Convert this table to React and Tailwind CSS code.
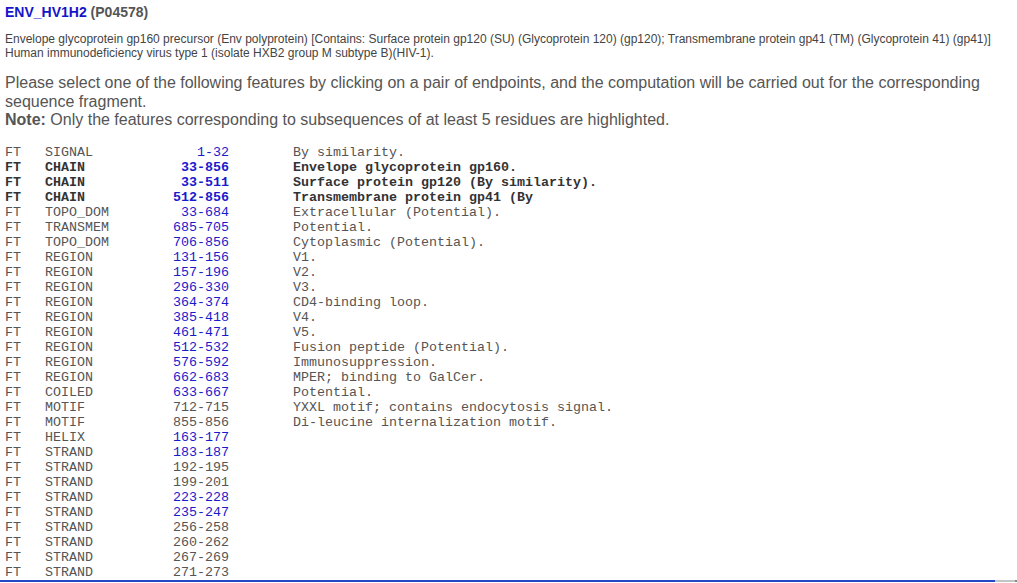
import React from 'react';

// feature rows: [type, range, description, highlighted range?, bold?]
const features = [
  ['SIGNAL', '1-32', 'By similarity.', true, false],
  ['CHAIN', '33-856', 'Envelope glycoprotein gp160.', true, true],
  ['CHAIN', '33-511', 'Surface protein gp120 (By similarity).', true, true],
  ['CHAIN', '512-856', 'Transmembrane protein gp41 (By', true, true],
  ['TOPO_DOM', '33-684', 'Extracellular (Potential).', true, false],
  ['TRANSMEM', '685-705', 'Potential.', true, false],
  ['TOPO_DOM', '706-856', 'Cytoplasmic (Potential).', true, false],
  ['REGION', '131-156', 'V1.', true, false],
  ['REGION', '157-196', 'V2.', true, false],
  ['REGION', '296-330', 'V3.', true, false],
  ['REGION', '364-374', 'CD4-binding loop.', true, false],
  ['REGION', '385-418', 'V4.', true, false],
  ['REGION', '461-471', 'V5.', true, false],
  ['REGION', '512-532', 'Fusion peptide (Potential).', true, false],
  ['REGION', '576-592', 'Immunosuppression.', true, false],
  ['REGION', '662-683', 'MPER; binding to GalCer.', true, false],
  ['COILED', '633-667', 'Potential.', true, false],
  ['MOTIF', '712-715', 'YXXL motif; contains endocytosis signal.', false, false],
  ['MOTIF', '855-856', 'Di-leucine internalization motif.', false, false],
  ['HELIX', '163-177', '', true, false],
  ['STRAND', '183-187', '', true, false],
  ['STRAND', '192-195', '', false, false],
  ['STRAND', '199-201', '', false, false],
  ['STRAND', '223-228', '', true, false],
  ['STRAND', '235-247', '', true, false],
  ['STRAND', '256-258', '', false, false],
  ['STRAND', '260-262', '', false, false],
  ['STRAND', '267-269', '', false, false],
  ['STRAND', '271-273', '', false, false],
];

function FeatureRow({ type, range, desc, linked, bold }) {
  return (
    <div className={`flex h-[15px] leading-[15px] whitespace-pre ${bold ? 'font-bold text-[#333]' : 'text-[#555]'}`}>
      <span className="w-[40px]">FT</span>
      <span className="w-[96px]">{type}</span>
      <span className={`w-[88px] text-right ${linked ? 'text-[#1a1acc] cursor-pointer' : ''}`}>{range}</span>
      <span className="ml-[64px]">{desc}</span>
    </div>
  );
}

export default function App() {
  return (
    <div className="h-[583px] flex flex-col bg-white overflow-hidden font-['Liberation_Sans',Arial,sans-serif]">
      <div className="flex-1 overflow-hidden px-[5px] pt-[4px]">
        <h1 className="text-[14px] leading-[17px] font-bold text-[#555]">
          <span className="text-[#1414c8]">ENV_HV1H2</span> (P04578)
        </h1>

        <p className="mt-[11px] text-[12px] leading-[14px] text-[#444] whitespace-nowrap">
          Envelope glycoprotein gp160 precursor (Env polyprotein) [Contains: Surface protein gp120 (SU) (Glycoprotein 120) (gp120); Transmembrane protein gp41 (TM) (Glycoprotein 41) (gp41)]
          <br />
          Human immunodeficiency virus type 1 (isolate HXB2 group M subtype B)(HIV-1).
        </p>

        <p className="mt-[14px] text-[16px] leading-[18.5px] text-[#555]">
          Please select one of the following features by clicking on a pair of endpoints, and the computation will be carried out for the corresponding
          <br />
          sequence fragment.
          <br />
          <b>Note:</b> Only the features corresponding to subsequences of at least 5 residues are highlighted.
        </p>

        <div className="mt-[15px] font-['Liberation_Mono','Courier_New',monospace] text-[13.33px]">
          {features.map(([type, range, desc, linked, bold], i) => (
            <FeatureRow key={i} type={type} range={range} desc={desc} linked={linked} bold={bold} />
          ))}
        </div>
      </div>

      <div className="flex h-[2px] mb-[1px] shrink-0">
        <div className="w-[995px] bg-[#2447c8]" />
        <div className="flex-1 bg-[#c4c4c4]" />
        <div className="w-[2px] bg-[#888]" />
      </div>
    </div>
  );
}
